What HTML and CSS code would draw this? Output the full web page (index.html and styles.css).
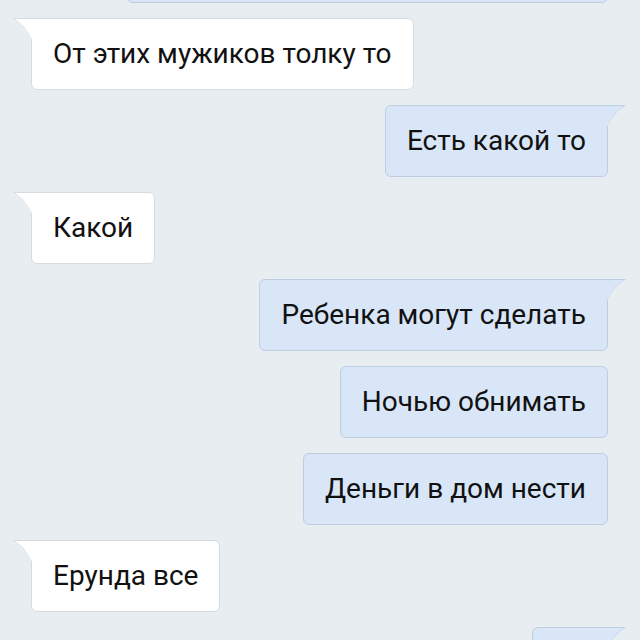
FILE: index.html
```html
<!DOCTYPE html>
<html lang="ru">
<head>
<meta charset="utf-8">
<link rel="stylesheet" href="styles.css">
</head>
<body>
<div class="chat">
  <div class="msg out"><div class="bubble blank-top"></div></div>
  <div class="msg in"><div class="bubble">От этих мужиков толку то</div></div>
  <div class="msg out"><div class="bubble">Есть какой то</div></div>
  <div class="msg in"><div class="bubble">Какой</div></div>
  <div class="msg out"><div class="bubble">Ребенка могут сделать</div></div>
  <div class="msg out cont"><div class="bubble">Ночью обнимать</div></div>
  <div class="msg out cont"><div class="bubble">Деньги в дом нести</div></div>
  <div class="msg in"><div class="bubble">Ерунда все</div></div>
  <div class="msg out"><div class="bubble blank-bottom"></div></div>
</div>
</body>
</html>
```
FILE: styles.css
```css
html, body {
  margin: 0;
  padding: 0;
  width: 640px;
  height: 640px;
  overflow: hidden;
  background: #e8edf2;
}
.chat {
  display: flex;
  flex-direction: column;
  gap: 15px;
  margin-top: -69px;
  font-family: Roboto, "Noto Sans", sans-serif;
  font-size: 28px;
  color: #111111;
}
.msg { display: flex; }
.msg.in { justify-content: flex-start; padding-left: 31px; }
.msg.out { justify-content: flex-end; padding-right: 32px; }
.bubble {
  position: relative;
  height: 72px;
  box-sizing: border-box;
  line-height: 70px;
  padding: 0 21px;
  border-radius: 6px;
  white-space: nowrap;
}
.blank-top { width: 481px; }
.blank-bottom { width: 76px; }
.in .bubble {
  background: #ffffff;
  border: 1px solid #d6dbe1;
  border-top-left-radius: 0;
}
.out .bubble {
  background: #d8e6f7;
  border: 1px solid #bfcde0;
  border-top-right-radius: 0;
}
.out.cont .bubble { border-top-right-radius: 6px; }
.msg:not(.cont) .bubble::before {
  content: "";
  position: absolute;
  top: -1px;
  width: 20px;
  height: 23px;
}
.in .bubble::before {
  left: -19px;
  background: #d6dbe1;
  clip-path: polygon(0 0, 100% 0, 100% 100%, 92% 90%, 75% 62%, 45% 30%);
}
.in .bubble::after {
  content: "";
  position: absolute;
  top: 0;
  left: -17px;
  width: 18px;
  height: 22px;
  background: #ffffff;
  clip-path: polygon(0 0, 100% 0, 100% 100%, 92% 90%, 75% 62%, 45% 30%);
}
.out .bubble::before {
  right: -19px;
  background: #bfcde0;
  clip-path: polygon(0 0, 100% 0, 55% 30%, 25% 62%, 8% 90%, 0 100%);
}
.out:not(.cont) .bubble::after {
  content: "";
  position: absolute;
  top: 0;
  right: -17px;
  width: 18px;
  height: 22px;
  background: #d8e6f7;
  clip-path: polygon(0 0, 100% 0, 55% 30%, 25% 62%, 8% 90%, 0 100%);
}
```
